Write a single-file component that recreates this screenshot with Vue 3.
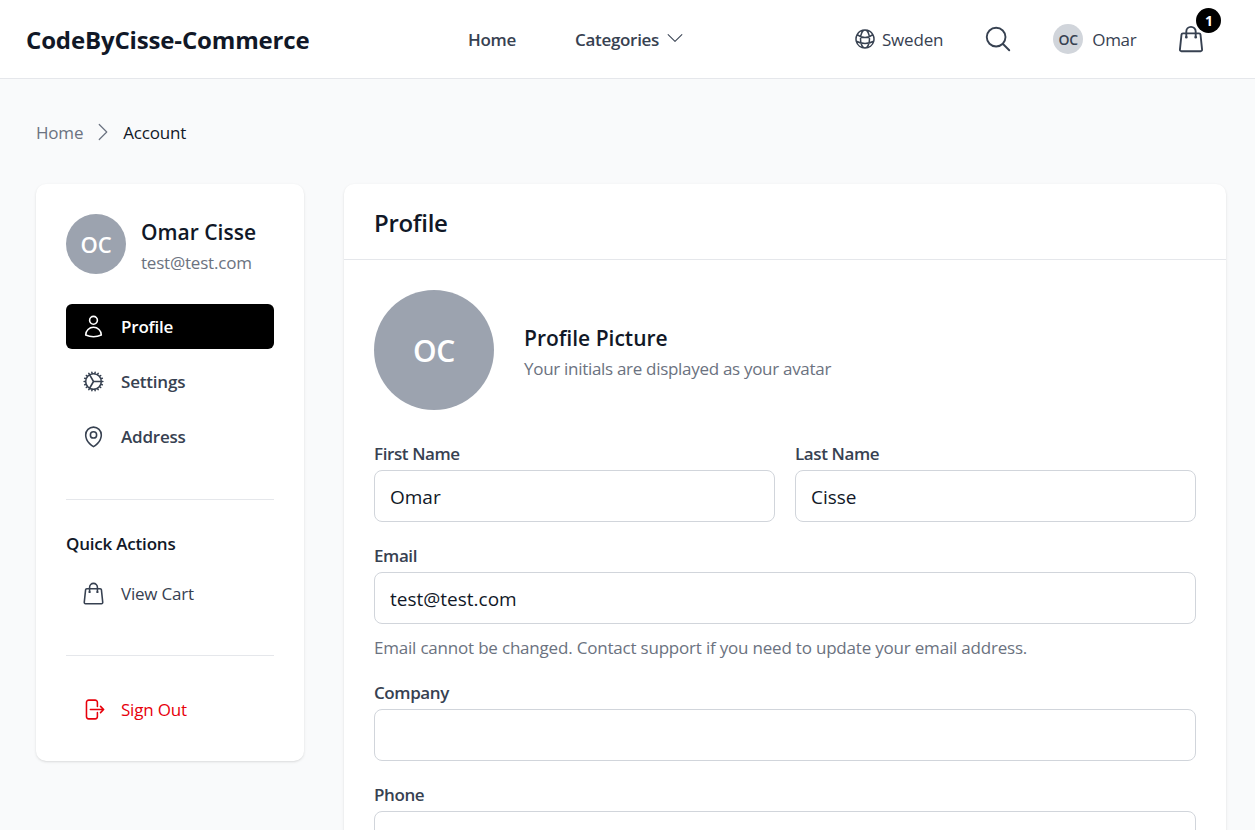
<script setup>
const menu = [
  { label: "Profile", icon: "user", active: true },
  { label: "Settings", icon: "cog" },
  { label: "Address", icon: "pin" },
];

const icons = {
  user: ["M15.75 6a3.75 3.75 0 1 1-7.5 0 3.75 3.75 0 0 1 7.5 0ZM4.501 20.118a7.5 7.5 0 0 1 14.998 0A17.933 17.933 0 0 1 12 21.75c-2.676 0-5.216-.584-7.499-1.632Z"],
  cog: ["M4.5 12a7.5 7.5 0 0 0 15 0m-15 0a7.5 7.5 0 1 1 15 0m-15 0H3m16.5 0H21m-1.5 0H12m-8.457 3.077 1.41-.513m14.095-5.13 1.41-.513M5.106 17.785l1.15-.964m11.49-9.642 1.149-.964M7.501 19.795l.75-1.3m7.5-12.99.75-1.3m-6.063 16.658.26-1.477m2.605-14.772.26-1.477m0 17.726-.26-1.477M10.698 4.614l-.26-1.477M16.5 19.794l-.75-1.299M7.5 4.205 12 12m6.894 5.785-1.149-.964M6.256 7.178l-1.15-.964m15.352 8.864-1.41-.513M4.954 9.435l-1.41-.514M12.002 12l-3.75 6.495"],
  pin: ["M15 10.5a3 3 0 1 1-6 0 3 3 0 0 1 6 0Z", "M19.5 10.5c0 7.142-7.5 11.25-7.5 11.25S4.5 17.642 4.5 10.5a7.5 7.5 0 1 1 15 0Z"],
  bag: ["M15.75 10.5V6a3.75 3.75 0 1 0-7.5 0v4.5m11.356-1.993 1.263 12c.07.665-.45 1.243-1.119 1.243H4.25a1.125 1.125 0 0 1-1.12-1.243l1.264-12A1.125 1.125 0 0 1 5.513 7.5h12.974c.576 0 1.059.435 1.119 1.007ZM8.625 10.5a.375.375 0 1 1-.75 0 .375.375 0 0 1 .75 0Zm7.5 0a.375.375 0 1 1-.75 0 .375.375 0 0 1 .75 0Z"],
  search: ["m21 21-5.197-5.197m0 0A7.5 7.5 0 1 0 5.196 5.196a7.5 7.5 0 0 0 10.607 10.607Z"],
  globe: ["M12 21a9.004 9.004 0 0 0 8.716-6.747M12 21a9.004 9.004 0 0 1-8.716-6.747M12 21c2.485 0 4.5-4.03 4.5-9S14.485 3 12 3m0 18c-2.485 0-4.5-4.03-4.5-9S9.515 3 12 3m0 0a8.997 8.997 0 0 1 7.843 4.582M12 3a8.997 8.997 0 0 0-7.843 4.582m15.686 0A11.953 11.953 0 0 1 12 10.5c-2.998 0-5.74-1.1-7.843-2.918m15.686 0A8.959 8.959 0 0 1 21 12c0 .778-.099 1.533-.284 2.253m0 0A17.919 17.919 0 0 1 12 16.5c-3.162 0-6.133-.815-8.716-2.247m0 0A9.015 9.015 0 0 1 3 12c0-1.605.42-3.113 1.157-4.418"],
  logout: ["M15.75 9V5.25A2.25 2.25 0 0 0 13.5 3h-6a2.25 2.25 0 0 0-2.25 2.25v13.5A2.25 2.25 0 0 0 7.5 21h6a2.25 2.25 0 0 0 2.25-2.25V15m3 0 3-3m0 0-3-3m3 3H9"],
  down: ["m19.5 8.25-7.5 7.5-7.5-7.5"],
  right: ["m8.25 4.5 7.5 7.5-7.5 7.5"],
};
</script>

<template>
  <div class="page">
    <header class="topbar">
      <span class="logo">CodeByCisse-Commerce</span>
      <nav class="topnav">
        <a class="topnav__link">Home</a>
        <a class="topnav__link">
          Categories
          <svg class="chev" viewBox="0 0 24 24"><path v-for="d in icons.down" :key="d" :d="d" /></svg>
        </a>
      </nav>
      <div class="tools">
        <span class="tool tool--country">
          <svg class="ic24" viewBox="0 0 24 24"><path v-for="d in icons.globe" :key="d" :d="d" /></svg>
          Sweden
        </span>
        <svg class="ic30 tool--search" viewBox="0 0 24 24"><path v-for="d in icons.search" :key="d" :d="d" /></svg>
        <span class="tool tool--user">
          <span class="mini-avatar">OC</span>
          Omar
        </span>
        <span class="cart">
          <svg class="ic30" viewBox="0 0 24 24"><path v-for="d in icons.bag" :key="d" :d="d" /></svg>
          <span class="cart__badge">1</span>
        </span>
      </div>
    </header>

    <main class="content">
      <div class="crumbs">
        <span class="crumbs__home">Home</span>
        <svg class="crumbs__sep" viewBox="0 0 24 24"><path v-for="d in icons.right" :key="d" :d="d" /></svg>
        <span class="crumbs__now">Account</span>
      </div>

      <div class="columns">
        <aside class="side card">
          <div class="who">
            <span class="who__avatar">OC</span>
            <div class="who__text">
              <div class="who__name">Omar Cisse</div>
              <div class="who__mail">test@test.com</div>
            </div>
          </div>

          <div class="side__menu">
            <a v-for="item in menu" :key="item.label" class="side__item" :class="{ 'side__item--on': item.active }">
              <svg class="side__icon" viewBox="0 0 24 24"><path v-for="d in icons[item.icon]" :key="d" :d="d" /></svg>
              {{ item.label }}
            </a>
          </div>

          <div class="side__block">
            <div class="side__title">Quick Actions</div>
            <a class="side__item side__item--plain">
              <svg class="side__icon" viewBox="0 0 24 24"><path v-for="d in icons.bag" :key="d" :d="d" /></svg>
              View Cart
            </a>
          </div>

          <div class="side__block side__block--out">
            <a class="side__item side__item--plain side__item--red">
              <svg class="side__icon" viewBox="0 0 24 24"><path v-for="d in icons.logout" :key="d" :d="d" /></svg>
              Sign Out
            </a>
          </div>
        </aside>

        <section class="main card">
          <h1 class="main__head">Profile</h1>
          <div class="main__body">
            <div class="pic">
              <span class="pic__avatar">OC</span>
              <div class="pic__text">
                <div class="pic__title">Profile Picture</div>
                <div class="pic__sub">Your initials are displayed as your avatar</div>
              </div>
            </div>

            <form class="form">
              <div class="form__row">
                <label class="field">
                  <span class="field__label">First Name</span>
                  <input class="field__input" value="Omar" />
                </label>
                <label class="field">
                  <span class="field__label">Last Name</span>
                  <input class="field__input" value="Cisse" />
                </label>
              </div>
              <label class="field">
                <span class="field__label">Email</span>
                <input class="field__input" value="test@test.com" />
                <span class="field__help">Email cannot be changed. Contact support if you need to update your email address.</span>
              </label>
              <label class="field">
                <span class="field__label">Company</span>
                <input class="field__input" />
              </label>
              <label class="field">
                <span class="field__label">Phone</span>
                <input class="field__input" />
              </label>
            </form>
          </div>
        </section>
      </div>
    </main>
  </div>
</template>

<style>
html, body {
  margin: 0;
  overflow: hidden;
  background: #f9fafb;
}
</style>

<style scoped>
.page {
  height: 830px;
  overflow: hidden;
  background: #f9fafb;
  color: #111827;
  font-family: "Open Sans", "Noto Sans", sans-serif;
  font-size: 17px;
  letter-spacing: -0.2px;
}

svg {
  fill: none;
  stroke: currentColor;
  stroke-width: 1.5;
  stroke-linecap: round;
  stroke-linejoin: round;
  flex: none;
  display: block;
}

.ic24 { width: 24px; height: 24px; }
.ic30 { width: 30px; height: 30px; }

.topbar {
  height: 78px;
  display: flex;
  align-items: center;
  padding-left: 26px;
  background: #fff;
  border-bottom: 1px solid #e5e7eb;
}

.logo {
  width: 283px;
  font-size: 24px;
  font-weight: 700;
  letter-spacing: -0.15px;
  white-space: nowrap;
}

.topnav {
  display: flex;
  gap: 59px;
  margin-left: 159px;
  width: 215px;
}

.topnav__link {
  display: flex;
  align-items: center;
  gap: 5px;
  font-weight: 600;
  letter-spacing: -0.3px;
  color: #374151;
  white-space: nowrap;
}

.chev {
  width: 22px;
  height: 22px;
  margin-top: -3px;
  stroke-width: 1.1;
}

.tools {
  display: flex;
  align-items: center;
  margin-left: 170px;
  color: #374151;
}

.tool {
  display: flex;
  align-items: center;
  white-space: nowrap;
}

.tool--country { gap: 5px; }
.tool--search { margin-left: 40px; }
.tool--user { gap: 9px; margin-left: 40px; letter-spacing: -0.3px; }

.mini-avatar {
  width: 30px;
  height: 30px;
  border-radius: 50%;
  background: #d1d5db;
  display: flex;
  align-items: center;
  justify-content: center;
  font-size: 14px;
  font-weight: 600;
}

.cart {
  position: relative;
  margin-left: 40px;
}

.cart__badge {
  position: absolute;
  top: -16px;
  right: -15px;
  width: 25px;
  height: 25px;
  border-radius: 50%;
  background: #000;
  color: #fff;
  font-size: 14px;
  font-weight: 700;
  display: flex;
  align-items: center;
  justify-content: center;
}

.content {
  padding: 41px 29px 0 36px;
}

.crumbs {
  display: flex;
  align-items: center;
  height: 24px;
}

.crumbs__home { color: #6b7280; }
.crumbs__sep { width: 24px; height: 24px; margin: 0 8px; color: #6b7280; stroke-width: 1.2; }
.crumbs__now { color: #111827; }

.columns {
  display: grid;
  grid-template-columns: 268px 1fr;
  gap: 40px;
  margin-top: 40px;
  align-items: start;
}

.card {
  background: #fff;
  border-radius: 10px;
  box-shadow: 0 1px 3px rgba(0, 0, 0, 0.1), 0 1px 2px -1px rgba(0, 0, 0, 0.1);
}

.side {
  padding: 30px;
}

.who {
  display: flex;
  align-items: center;
  gap: 15px;
  height: 60px;
}

.who__text { padding-top: 4px; }

.who__avatar {
  width: 60px;
  height: 60px;
  border-radius: 50%;
  background: #9ca3af;
  color: #fff;
  font-size: 22px;
  font-weight: 600;
  display: flex;
  align-items: center;
  justify-content: center;
  flex: none;
}

.who__name {
  font-size: 21px;
  font-weight: 600;
  letter-spacing: 0;
  line-height: 28px;
}

.who__mail {
  line-height: 24px;
  margin-top: 5px;
  color: #6b7280;
}

.side__menu {
  display: flex;
  flex-direction: column;
  gap: 10px;
  margin-top: 30px;
  padding-bottom: 40px;
  border-bottom: 1px solid #e5e7eb;
}

.side__item {
  height: 45px;
  display: flex;
  align-items: center;
  gap: 15px;
  padding: 0 15px;
  border-radius: 6px;
  font-weight: 600;
  color: #374151;
}

.side__icon {
  width: 25px;
  height: 25px;
}

.side__item--on {
  background: #000;
  color: #fff;
}

.side__item--plain { font-weight: 400; }
.side__item--red { color: #e7000b; }

.side__block {
  padding: 32px 0 39px;
  border-bottom: 1px solid #e5e7eb;
}

.side__block--out {
  padding: 31px 0 0;
  margin-bottom: -1px;
  border-bottom: 0;
}

.side__title {
  font-weight: 600;
  line-height: 24px;
  margin-bottom: 15px;
}

.main__head {
  margin: 0;
  height: 73px;
  display: flex;
  align-items: center;
  padding: 2px 30px 0;
  font-size: 24px;
  font-weight: 600;
  letter-spacing: -0.3px;
  border-bottom: 1px solid #e5e7eb;
}

.main__body {
  padding: 30px;
}

.pic {
  display: flex;
  align-items: center;
  gap: 30px;
}

.pic__text { padding-top: 4px; }

.pic__avatar {
  width: 120px;
  height: 120px;
  border-radius: 50%;
  background: #9ca3af;
  color: #fff;
  font-size: 30px;
  font-weight: 600;
  display: flex;
  align-items: center;
  justify-content: center;
  flex: none;
}

.pic__title {
  font-size: 21px;
  font-weight: 600;
  letter-spacing: 0;
  line-height: 28px;
}

.pic__sub {
  line-height: 24px;
  margin-top: 5px;
  letter-spacing: -0.3px;
  color: #6b7280;
}

.form {
  display: flex;
  flex-direction: column;
  gap: 20px;
  margin-top: 30px;
}

.form__row {
  display: grid;
  grid-template-columns: 1fr 1fr;
  gap: 20px;
}

.field {
  display: flex;
  flex-direction: column;
}

.field__label {
  font-weight: 600;
  letter-spacing: -0.4px;
  line-height: 28px;
  margin-bottom: 2px;
  color: #374151;
}

.field__input {
  height: 52px;
  box-sizing: border-box;
  width: 100%;
  padding: 1px 15px 0;
  border: 1px solid #d1d5db;
  border-radius: 8px;
  background: #fff;
  color: #111827;
  font: inherit;
  font-size: 19px;
  letter-spacing: 0;
  outline: none;
}

.field__help {
  margin-top: 12px;
  margin-bottom: -1px;
  line-height: 24px;
  color: #6b7280;
}
</style>
